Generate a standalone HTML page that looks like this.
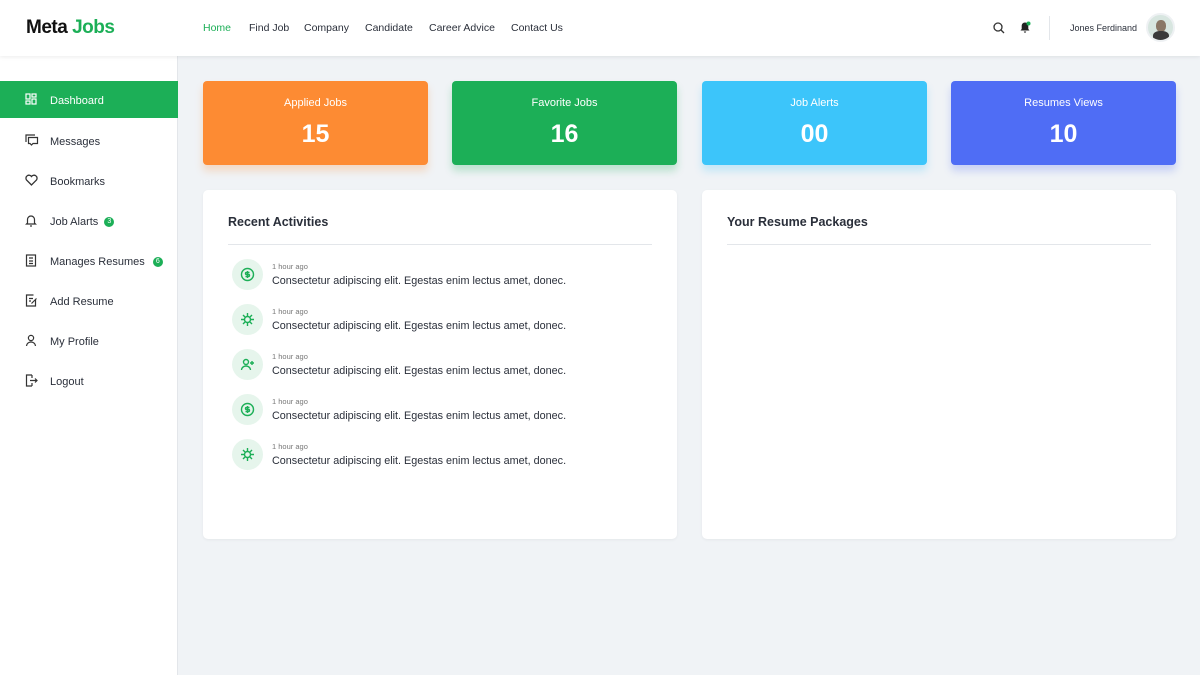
<!DOCTYPE html>
<html><head><meta charset="utf-8"><style>
*{margin:0;padding:0;box-sizing:border-box}
body{width:1200px;height:675px;background:#f0f3f6;font-family:"Liberation Sans",sans-serif;position:relative;overflow:hidden;color:#1f2330}
.hdr{position:absolute;left:0;top:0;width:1200px;height:56px;background:#fff;box-shadow:0 1px 4px rgba(0,0,0,.08);z-index:2}
.logo{position:absolute;left:26px;top:17px;font-size:19px;font-weight:700;color:#111;letter-spacing:-.5px}
.logo span{color:#1caf57}
.nav span{position:absolute;top:22px;font-size:10.5px;color:#2a2f3a;white-space:nowrap}
.nav .a{color:#1caf57}
.side{position:absolute;left:0;top:56px;width:178px;height:619px;background:#fff;border-right:1px solid #e3e6ea}
.it{position:absolute;left:0;width:178px;height:37px;font-size:11px;color:#2a2f3a;display:flex;align-items:center;padding-left:50px;padding-top:2px}
.it svg{position:absolute;left:25px;top:12px}
.it.act{background:#1caf57;color:#fff}
.bd{display:inline-block;width:10px;height:10px;border-radius:50%;background:#1caf57;color:#fff;font-size:7px;text-align:center;line-height:10px;margin-left:6px}
.card{position:absolute;top:81px;width:225px;height:84px;border-radius:4px;color:#fff;text-align:center}
.card .t{font-size:11px;margin-top:16px}
.card .n{font-size:25px;font-weight:700;margin-top:11px}
.panel{position:absolute;top:190px;width:474px;height:349px;background:#fff;border-radius:5px;box-shadow:0 1px 3px rgba(0,0,0,.05)}
.panel h3{position:absolute;left:25px;top:25px;font-size:12.5px;font-weight:700;color:#2a2f3a}
.panel .ln{position:absolute;left:25px;right:25px;top:54px;border-top:1px solid #e3e6ea}
.act-i{position:absolute;left:29px;width:420px;height:32px}
.ic{position:absolute;left:0;top:0;width:31px;height:31px;border-radius:50%;background:#e6f5ec}
.ic svg{position:absolute;left:8px;top:8px}
.tm{position:absolute;left:40px;top:3px;font-size:7.5px;color:#777}
.tx{position:absolute;left:40px;top:16px;font-size:10.8px;color:#2a2f3a;white-space:nowrap}
</style></head><body>
<div class="hdr">
<div class="logo">Meta <span>Jobs</span></div>
<div class="nav"><span class="a" style="left:203px">Home</span><span style="left:249px">Find Job</span><span style="left:304px">Company</span><span style="left:365px">Candidate</span><span style="left:429px">Career Advice</span><span style="left:511px">Contact Us</span></div>
<svg style="position:absolute;left:993px;top:22px" width="12" height="12" viewBox="0 0 12 12" fill="none" stroke="#333" stroke-width="1.3"><circle cx="5" cy="5" r="4"/><path d="M8 8l3 3"/></svg>
<svg style="position:absolute;left:1019px;top:21px" width="12" height="13" viewBox="0 0 12 13"><path d="M6 1.5c-2 0-3.3 1.5-3.3 3.5v3L1.5 9.5h9L9.3 8V5c0-2-1.3-3.5-3.3-3.5zM4.8 10.5a1.2 1.2 0 002.4 0z" fill="#222"/><circle cx="9.5" cy="2.5" r="2" fill="#1caf57"/></svg>
<div style="position:absolute;left:1049px;top:16px;height:24px;border-left:1px solid #e3e6ea"></div>
<div style="position:absolute;right:63px;top:23px;font-size:9px;color:#2a2f3a;white-space:nowrap">Jones Ferdinand</div>
<div style="position:absolute;left:1146px;top:13px;width:29px;height:29px;border-radius:50%;background:#d8e6e0;border:2px solid #eef1f3;overflow:hidden"><div style="position:absolute;left:8px;top:5px;width:10px;height:12px;border-radius:45%;background:#8a7766"></div><div style="position:absolute;left:5px;top:16px;width:16px;height:12px;border-radius:40% 40% 0 0;background:#3a3a3a"></div></div>
</div>
<div class="side">
<div class="it act" style="top:25px"><svg width="12" height="12" viewBox="0 0 12 12" fill="none" stroke="#fff" stroke-width="1.2"><rect x="1" y="1" width="4" height="5"/><rect x="7" y="1" width="4" height="3"/><rect x="1" y="8" width="4" height="3"/><rect x="7" y="6" width="4" height="5"/></svg>Dashboard</div>
<div class="it" style="top:66px"><svg width="14" height="12" viewBox="0 0 14 12" fill="none" stroke="#333" stroke-width="1.2"><path d="M1 8V1h9"/><path d="M3.5 3.5h9v6H8l-1.5 1.5L5 9.5H3.5z"/></svg>Messages</div>
<div class="it" style="top:106px"><svg width="13" height="12" viewBox="0 0 13 12" fill="none" stroke="#333" stroke-width="1.3"><path d="M6.5 11L1.5 6a2.8 2.8 0 015-3.5 2.8 2.8 0 015 3.5z"/></svg>Bookmarks</div>
<div class="it" style="top:146px"><svg width="12" height="13" viewBox="0 0 12 13" fill="none" stroke="#333" stroke-width="1.2"><path d="M2.5 9V5.5a3.5 3.5 0 017 0V9l1 1h-9z"/><path d="M5 12h2"/></svg>Job Alarts<span class="bd">3</span></div>
<div class="it" style="top:186px"><svg width="12" height="13" viewBox="0 0 12 13" fill="none" stroke="#333" stroke-width="1.2"><rect x="1.5" y="1" width="9" height="11"/><path d="M4 4h4M4 7h4M4 9.5h4"/></svg>Manages Resumes<span class="bd" style="margin-left:8px">6</span></div>
<div class="it" style="top:226px"><svg width="13" height="13" viewBox="0 0 13 13" fill="none" stroke="#333" stroke-width="1.2"><path d="M10.5 6v6h-9V1h7"/><path d="M4 4.5h4M4 7h2M6.5 9.5l5-5"/></svg>Add Resume</div>
<div class="it" style="top:266px"><svg width="12" height="13" viewBox="0 0 12 13" fill="none" stroke="#333" stroke-width="1.2"><circle cx="6" cy="4" r="2.6"/><path d="M1.5 12a4.5 4 0 019 0"/></svg>My Profile</div>
<div class="it" style="top:306px"><svg width="13" height="13" viewBox="0 0 13 13" fill="none" stroke="#333" stroke-width="1.2"><path d="M7 1H1.5v11H7M7 1v3M7 12V9M5 6.5h7M10 4.5l2 2-2 2"/></svg>Logout</div>
</div>
<div class="card" style="left:203px;background:#fd8b33;box-shadow:0 6px 8px rgba(253,139,51,.25)"><div class="t">Applied Jobs</div><div class="n">15</div></div>
<div class="card" style="left:452px;background:#1caf57;box-shadow:0 6px 8px rgba(28,175,87,.25)"><div class="t">Favorite Jobs</div><div class="n">16</div></div>
<div class="card" style="left:702px;background:#3cc5fa;box-shadow:0 6px 8px rgba(60,197,250,.25)"><div class="t">Job Alerts</div><div class="n">00</div></div>
<div class="card" style="left:951px;background:#4f6df5;box-shadow:0 6px 8px rgba(79,109,245,.25)"><div class="t">Resumes Views</div><div class="n">10</div></div>
<div class="panel" style="left:203px"><h3>Recent Activities</h3><div class="ln"></div>
<div class="act-i" style="top:69px"><div class="ic"><svg width="15" height="15" viewBox="0 0 15 15" fill="none" stroke="#1caf57" stroke-width="1.4"><circle cx="7.5" cy="7.5" r="6"/><path d="M9.5 5.5H6.5a1 1 0 000 2h2a1 1 0 010 2H5.5M7.5 4v7"/></svg></div><div class="tm">1 hour ago</div><div class="tx">Consectetur adipiscing elit. Egestas enim lectus amet, donec.</div></div>
<div class="act-i" style="top:114px"><div class="ic"><svg width="15" height="15" viewBox="0 0 15 15" fill="none" stroke="#1caf57" stroke-width="1.4"><circle cx="7.5" cy="7.5" r="3"/><path d="M7.5 1v3M7.5 11v3M1 7.5h3M11 7.5h3M3 3l2 2M10 10l2 2M12 3l-2 2M5 10l-2 2"/></svg></div><div class="tm">1 hour ago</div><div class="tx">Consectetur adipiscing elit. Egestas enim lectus amet, donec.</div></div>
<div class="act-i" style="top:159px"><div class="ic"><svg width="15" height="15" viewBox="0 0 15 15" fill="none" stroke="#1caf57" stroke-width="1.4"><circle cx="6" cy="5" r="2.5"/><path d="M1.5 13a4.5 4 0 019 0M12 4v4M10 6h4"/></svg></div><div class="tm">1 hour ago</div><div class="tx">Consectetur adipiscing elit. Egestas enim lectus amet, donec.</div></div>
<div class="act-i" style="top:204px"><div class="ic"><svg width="15" height="15" viewBox="0 0 15 15" fill="none" stroke="#1caf57" stroke-width="1.4"><circle cx="7.5" cy="7.5" r="6"/><path d="M9.5 5.5H6.5a1 1 0 000 2h2a1 1 0 010 2H5.5M7.5 4v7"/></svg></div><div class="tm">1 hour ago</div><div class="tx">Consectetur adipiscing elit. Egestas enim lectus amet, donec.</div></div>
<div class="act-i" style="top:249px"><div class="ic"><svg width="15" height="15" viewBox="0 0 15 15" fill="none" stroke="#1caf57" stroke-width="1.4"><circle cx="7.5" cy="7.5" r="3"/><path d="M7.5 1v3M7.5 11v3M1 7.5h3M11 7.5h3M3 3l2 2M10 10l2 2M12 3l-2 2M5 10l-2 2"/></svg></div><div class="tm">1 hour ago</div><div class="tx">Consectetur adipiscing elit. Egestas enim lectus amet, donec.</div></div>
</div>
<div class="panel" style="left:702px"><h3>Your Resume Packages</h3><div class="ln"></div></div>
</body></html>
